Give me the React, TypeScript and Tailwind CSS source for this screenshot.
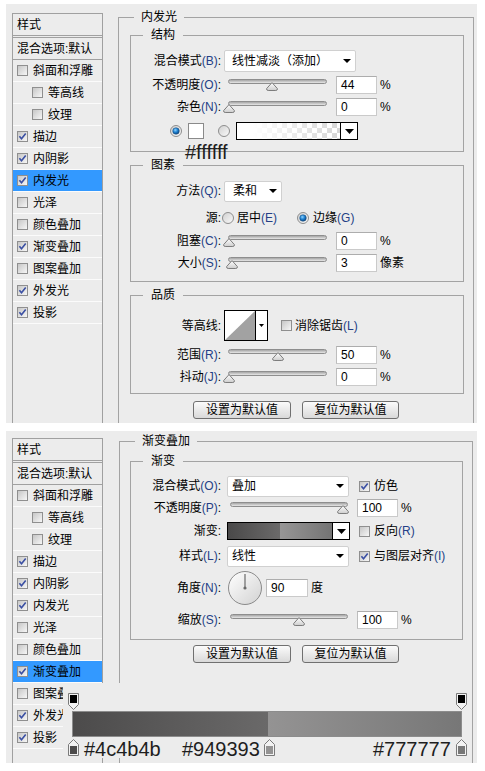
import React from "react";

const F = "font-['Liberation_Sans','Noto_Sans_CJK_SC',sans-serif]";

function Defs() {
  return (
    <svg width="0" height="0" className="absolute">
      <defs>
        <linearGradient id="chkBg" x1="0" y1="0" x2="1" y2="1">
          <stop offset="0" stopColor="#c4c4c4" />
          <stop offset="1" stopColor="#f9f9f9" />
        </linearGradient>
        <linearGradient id="radBg" x1="0" y1="0" x2="1" y2="1">
          <stop offset="0" stopColor="#cfcfcf" />
          <stop offset="1" stopColor="#fbfbfb" />
        </linearGradient>
        <radialGradient id="radDot" cx="0.4" cy="0.35" r="0.7">
          <stop offset="0" stopColor="#8fd4ff" />
          <stop offset="0.5" stopColor="#1c7fcf" />
          <stop offset="1" stopColor="#0b3f78" />
        </radialGradient>
        <linearGradient id="dialBg" x1="0" y1="0" x2="1" y2="1">
          <stop offset="0" stopColor="#ffffff" />
          <stop offset="1" stopColor="#d2d2d2" />
        </linearGradient>
        <linearGradient id="thumbBg" x1="0" y1="0" x2="0" y2="1">
          <stop offset="0" stopColor="#ffffff" />
          <stop offset="1" stopColor="#cdcdcd" />
        </linearGradient>
      </defs>
    </svg>
  );
}

function Check({ on }: { on: boolean }) {
  return (
    <svg width="11" height="11" viewBox="0 0 11 11" className="block shrink-0">
      <rect x="0.5" y="0.5" width="10" height="10" fill="url(#chkBg)" stroke="#8f8f8f" />
      {on && <path d="M2.4 5.3 L4.5 7.8 L8.7 2.5" fill="none" stroke="#3a4fa3" strokeWidth="1.6" />}
    </svg>
  );
}

function Radio({ on }: { on: boolean }) {
  return (
    <svg width="12" height="12" viewBox="0 0 12 12" className="block shrink-0">
      <circle cx="6" cy="6" r="5.5" fill="url(#radBg)" stroke="#8d8d8d" />
      {on && <circle cx="6" cy="6" r="3.3" fill="url(#radDot)" stroke="#1b4c7d" strokeWidth="0.5" />}
    </svg>
  );
}

function Tri() {
  return (
    <svg width="8" height="4" viewBox="0 0 8 4" className="block shrink-0">
      <path d="M0 0 H8 L4 4 Z" fill="#000" />
    </svg>
  );
}

function Slider({ w, x }: { w: string; x: number }) {
  return (
    <div className={"relative h-[22px] shrink-0 " + w}>
      <div className="absolute left-0 right-0 top-[5px] h-[5px] rounded-full border border-[#8e8e8e] bg-linear-to-b from-[#a6a6a6] to-[#e8e8e8]" />
      <svg width="12" height="9" viewBox="0 0 12 9" className="absolute top-[8px]" style={{ left: x - 6 }}>
        <path d="M6 0.6 L11.4 6.6 Q11.6 8.5 9.8 8.5 H2.2 Q0.4 8.5 0.6 6.6 Z" fill="url(#thumbBg)" stroke="#7d7d7d" />
      </svg>
    </div>
  );
}

function Field({ w, v, cls }: { w: string; v: string; cls: string }) {
  return (
    <div className={"h-[18px] bg-white border border-[#cacaca] border-t-[#adadad] border-l-[#bdbdbd] pl-[4px] flex items-center shrink-0 " + w + " " + cls}>
      {v}
    </div>
  );
}

function Drop({ cls, text }: { cls: string; text: string }) {
  return (
    <div className={"flex items-center justify-between bg-white border border-[#d0d0d0] rounded-[2px] pr-[4px] shrink-0 " + cls}>
      <span>{text}</span>
      <Tri />
    </div>
  );
}

function Key({ k }: { k: string }) {
  return <span className="text-[#243f86]">({k})</span>;
}

function Row({ label, k, cls, children }: { label: string; k?: string; cls: string; children?: React.ReactNode }) {
  return (
    <div className={"flex items-center " + cls}>
      <div className="w-[90px] shrink-0 text-right whitespace-nowrap">
        {label}
        {k && <Key k={k} />}:
      </div>
      {children}
    </div>
  );
}

function Legend({ outer, children }: { outer?: boolean; children: React.ReactNode }) {
  return (
    <legend className={outer ? "ml-[15px] px-[7px] leading-[14px]" : "ml-[12px] px-[8px] leading-[14px]"}>{children}</legend>
  );
}

const items = [
  { t: "斜面和浮雕", c: false, i: false },
  { t: "等高线", c: false, i: true },
  { t: "纹理", c: false, i: true },
  { t: "描边", c: true, i: false },
  { t: "内阴影", c: true, i: false },
  { t: "内发光", c: true, i: false },
  { t: "光泽", c: false, i: false },
  { t: "颜色叠加", c: false, i: false },
  { t: "渐变叠加", c: true, i: false },
  { t: "图案叠加", c: false, i: false },
  { t: "外发光", c: true, i: false },
  { t: "投影", c: true, i: false },
];

function StyleList({ selected, h }: { selected: string; h: string }) {
  return (
    <div className={"w-[91px] border border-[#a0a0a0] shrink-0 " + h}>
      <div className="h-[21px] pl-[4px] flex items-center">样式</div>
      <div className="h-[3px] border-y border-[#a0a0a0]" />
      <div className="h-[21px] pl-[4px] flex items-center whitespace-nowrap">混合选项:默认</div>
      <div className="h-px bg-[#a0a0a0]" />
      {items.map((it) => (
        <div key={it.t}>
          <div
            className={
              "h-[21px] flex items-center gap-[5px] whitespace-nowrap " +
              (it.t === selected ? "bg-[#3399ff] " : "") +
              (it.i ? "pl-[19px]" : "pl-[4px]")
            }
          >
            <Check on={it.c} />
            <span>{it.t}</span>
          </div>
          <div className="h-px bg-[#fbfbfb]" />
        </div>
      ))}
    </div>
  );
}

function Buttons({ cls }: { cls: string }) {
  return (
    <div className={"flex justify-center gap-[11px] " + cls}>
      <button type="button" className="w-[98px] h-[18px] rounded-[3px] border border-[#707070] bg-linear-to-b from-[#fbfbfb] to-[#d9d9d9] flex items-center justify-center leading-none">
        设置为默认值
      </button>
      <button type="button" className="w-[97px] h-[18px] rounded-[3px] border border-[#707070] bg-linear-to-b from-[#fbfbfb] to-[#d9d9d9] flex items-center justify-center leading-none">
        复位为默认值
      </button>
    </div>
  );
}

function TopStop() {
  return (
    <svg width="11" height="17" viewBox="0 0 11 17" className="block">
      <path d="M0.5 0.5 H10.5 V11.5 L5.5 16.5 L0.5 11.5 Z" fill="#f2f2f2" stroke="#7a7a7a" />
      <rect x="2" y="2" width="7" height="8" fill="#000" />
    </svg>
  );
}

function BottomStop({ color }: { color: string }) {
  return (
    <svg width="11" height="17" viewBox="0 0 11 17" className="block">
      <path d="M5.5 0.5 L10.5 5.5 V16.5 H0.5 V5.5 Z" fill="#f2f2f2" stroke="#7a7a7a" />
      <rect x="2" y="7" width="7" height="8" fill={color} />
    </svg>
  );
}

export default function App() {
  return (
    <div className={"relative w-[485px] h-[771px] bg-white overflow-hidden text-[12px] leading-[14px] text-black " + F}>
      <Defs />

      {/* Panel 1: 内发光 */}
      <div className="mt-[4px] ml-[6px] w-[471px] h-[419px] bg-[#ececec] overflow-hidden flex items-start">
        <div className="ml-[6px] mt-[9px]">
          <StyleList selected="内发光" h="h-[420px]" />
        </div>
        <fieldset className="ml-[15px] mt-[6px] w-[356px] h-[440px] shrink-0 border border-[#a3a3a3]">
          <Legend outer>内发光</Legend>

          <fieldset className="mt-[4px] ml-[11px] mr-[9px] border border-[#a3a3a3] pb-[9px]">
            <Legend>结构</Legend>
            <Row label="混合模式" k="B" cls="h-[22px] mt-[8px]">
              <Drop cls="ml-[3px] w-[132px] h-[22px] pl-[7px]" text="线性减淡（添加）" />
            </Row>
            <Row label="不透明度" k="O" cls="h-[22px] mt-[2px]">
              <div className="ml-[7px]"><Slider w="w-[99px]" x={44} /></div>
              <Field w="w-[41px]" v="44" cls="ml-[9px]" />
              <span className="ml-[3px]">%</span>
            </Row>
            <Row label="杂色" k="N" cls="h-[22px]">
              <div className="ml-[7px]"><Slider w="w-[99px]" x={0.5} /></div>
              <Field w="w-[41px]" v="0" cls="ml-[9px]" />
              <span className="ml-[3px]">%</span>
            </Row>
            <div className="h-[22px] mt-[2px] flex items-center pl-[39px]">
              <Radio on />
              <div className="ml-[6px] w-[16px] h-[16px] bg-white border border-[#8a8a8a]" />
              <div className="ml-[14px]"><Radio on={false} /></div>
              <div className="ml-[6px] flex w-[122px] h-[18px] border border-black">
                <div className="relative flex-1 bg-[repeating-conic-gradient(#d6d6d6_0%_25%,#ffffff_0%_50%)] bg-[length:10px_10px]">
                  <div className="absolute inset-0 bg-linear-to-r from-white from-15% to-white/0" />
                </div>
                <div className="w-[17px] border-l border-black bg-white flex items-center justify-center">
                  <svg width="9" height="5" viewBox="0 0 9 5" className="block"><path d="M0 0 H9 L4.5 5 Z" fill="#000" /></svg>
                </div>
              </div>
            </div>
          </fieldset>

          <fieldset className="mt-[6px] ml-[11px] mr-[9px] border border-[#a3a3a3] pb-[7px]">
            <Legend>图素</Legend>
            <Row label="方法" k="Q" cls="h-[22px] mt-[8px]">
              <Drop cls="ml-[3px] w-[58px] h-[21px] pl-[8px]" text="柔和" />
            </Row>
            <div className="h-[22px] mt-[5px] flex items-center">
              <div className="w-[90px] shrink-0 text-right">源:</div>
              <div className="ml-[1px]"><Radio on={false} /></div>
              <span className="ml-[3px] whitespace-nowrap">居中<Key k="E" /></span>
              <div className="ml-[20px]"><Radio on /></div>
              <span className="ml-[4px] whitespace-nowrap">边缘<Key k="G" /></span>
            </div>
            <Row label="阻塞" k="C" cls="h-[22px] mt-[1px]">
              <div className="ml-[7px]"><Slider w="w-[99px]" x={0.5} /></div>
              <Field w="w-[41px]" v="0" cls="ml-[9px]" />
              <span className="ml-[3px]">%</span>
            </Row>
            <Row label="大小" k="S" cls="h-[22px]">
              <div className="ml-[7px]"><Slider w="w-[99px]" x={3.5} /></div>
              <Field w="w-[41px]" v="3" cls="ml-[9px]" />
              <span className="ml-[3px]">像素</span>
            </Row>
          </fieldset>

          <fieldset className="mt-[6px] ml-[11px] mr-[9px] border border-[#a3a3a3] pb-[5px]">
            <Legend>品质</Legend>
            <div className="h-[31px] mt-[8px] flex items-center">
              <div className="w-[90px] shrink-0 text-right">等高线:</div>
              <div className="ml-[3px] flex w-[44px] h-[31px] border border-black bg-white">
                <svg width="30" height="29" viewBox="0 0 30 29" className="block">
                  <polygon points="0,29 30,0 30,29" fill="#a2a2a2" />
                </svg>
                <div className="flex-1 border-l border-black flex items-center justify-center">
                  <svg width="5" height="3" viewBox="0 0 5 3" className="block"><path d="M0 0 H5 L2.5 3 Z" fill="#000" /></svg>
                </div>
              </div>
              <div className="ml-[13px]"><Check on={false} /></div>
              <span className="ml-[3px] whitespace-nowrap">消除锯齿<Key k="L" /></span>
            </div>
            <Row label="范围" k="R" cls="h-[22px] mt-[3px]">
              <div className="ml-[7px]"><Slider w="w-[99px]" x={49.5} /></div>
              <Field w="w-[41px]" v="50" cls="ml-[9px]" />
              <span className="ml-[3px]">%</span>
            </Row>
            <Row label="抖动" k="J" cls="h-[22px]">
              <div className="ml-[7px]"><Slider w="w-[99px]" x={1} /></div>
              <Field w="w-[41px]" v="0" cls="ml-[9px]" />
              <span className="ml-[3px]">%</span>
            </Row>
          </fieldset>

          <Buttons cls="mt-[7px]" />
        </fieldset>
      </div>

      {/* Panel 2: 渐变叠加 */}
      <div className="mt-[8px] ml-[6px] w-[471px] h-[332px] bg-[#ececec] overflow-hidden flex items-start">
        <div className="ml-[6px] mt-[7px]">
          <StyleList selected="渐变叠加" h="h-[400px]" />
        </div>
        <fieldset className="ml-[16px] mt-[3px] w-[354px] h-[400px] shrink-0 border border-[#a3a3a3]">
          <Legend outer>渐变叠加</Legend>
          <fieldset className="mt-[6px] ml-[10px] mr-[9px] border border-[#a3a3a3] pb-[8px]">
            <Legend>渐变</Legend>
            <Row label="混合模式" k="O" cls="h-[22px] mt-[7px]">
              <Drop cls="ml-[6px] w-[122px] h-[21px] pl-[4px]" text="叠加" />
              <div className="ml-[10px]"><Check on /></div>
              <span className="ml-[4px]">仿色</span>
            </Row>
            <Row label="不透明度" k="P" cls="h-[22px]">
              <div className="ml-[9px]"><Slider w="w-[118px]" x={112.5} /></div>
              <Field w="w-[41px]" v="100" cls="ml-[9px]" />
              <span className="ml-[3px]">%</span>
            </Row>
            <Row label="渐变" cls="h-[22px] mt-[1px]">
              <div className="ml-[6px] flex w-[123px] h-[18px] border border-black">
                <div className="flex-1 bg-[linear-gradient(to_right,#4a4949,#6b6a6a_50%,#979696_50%,#747474)]" />
                <div className="w-[17px] border-l border-black bg-white flex items-center justify-center">
                  <svg width="9" height="5" viewBox="0 0 9 5" className="block"><path d="M0 0 H9 L4.5 5 Z" fill="#000" /></svg>
                </div>
              </div>
              <div className="ml-[9px]"><Check on={false} /></div>
              <span className="ml-[4px] whitespace-nowrap">反向<Key k="R" /></span>
            </Row>
            <Row label="样式" k="L" cls="h-[22px] mt-[3px]">
              <Drop cls="ml-[6px] w-[122px] h-[21px] pl-[4px]" text="线性" />
              <div className="ml-[10px]"><Check on /></div>
              <span className="ml-[4px] whitespace-nowrap">与图层对齐<Key k="I" /></span>
            </Row>
            <Row label="角度" k="N" cls="h-[36px] mt-[3px]">
              <svg width="34" height="34" viewBox="0 0 34 34" className="block ml-[7px] shrink-0">
                <circle cx="17" cy="17" r="16.5" fill="url(#dialBg)" stroke="#8a8a8a" />
                <line x1="17" y1="17" x2="17" y2="3" stroke="#6a6a6a" strokeWidth="1.2" />
                <circle cx="17" cy="17" r="1.6" fill="#6a6a6a" />
              </svg>
              <Field w="w-[42px]" v="90" cls="ml-[4px]" />
              <span className="ml-[3px]">度</span>
            </Row>
            <Row label="缩放" k="S" cls="h-[22px] mt-[3px]">
              <div className="ml-[9px]"><Slider w="w-[118px]" x={69} /></div>
              <Field w="w-[41px]" v="100" cls="ml-[9px]" />
              <span className="ml-[3px]">%</span>
            </Row>
          </fieldset>
          <Buttons cls="mt-[5px]" />
        </fieldset>
      </div>

      {/* #ffffff annotation */}
      <div className="absolute left-[185px] top-[142px] text-[20px] leading-[20px] text-[#1e1e1e] font-['Liberation_Sans',sans-serif]">
        #ffffff
      </div>

      {/* Gradient editor overlay */}
      <div className="absolute left-[63px] top-[683px] w-[408px] h-[75px] bg-[#ececec] font-['Liberation_Sans',sans-serif]">
        <div className="absolute left-[5px] top-[10px]"><TopStop /></div>
        <div className="absolute left-[393px] top-[10px]"><TopStop /></div>
        <div className="absolute left-[9px] top-[28px] w-[390px] h-[26px] border border-[#8c8c8c] bg-[linear-gradient(to_right,#4c4b4b,#6a6969_50.3%,#949393_50.3%,#777777)]" />
        <div className="absolute left-[5px] top-[56px]"><BottomStop color="#4c4b4b" /></div>
        <div className="absolute left-[201px] top-[56px]"><BottomStop color="#949393" /></div>
        <div className="absolute left-[393px] top-[56px]"><BottomStop color="#777777" /></div>
        <div className="absolute left-[21px] top-[56px] text-[20px] leading-[20px] text-[#1e1e1e]">#4c4b4b</div>
        <div className="absolute left-[119px] top-[56px] text-[20px] leading-[20px] text-[#1e1e1e]">#949393</div>
        <div className="absolute left-[310px] top-[56px] text-[20px] leading-[20px] text-[#1e1e1e]">#777777</div>
      </div>
    </div>
  );
}
